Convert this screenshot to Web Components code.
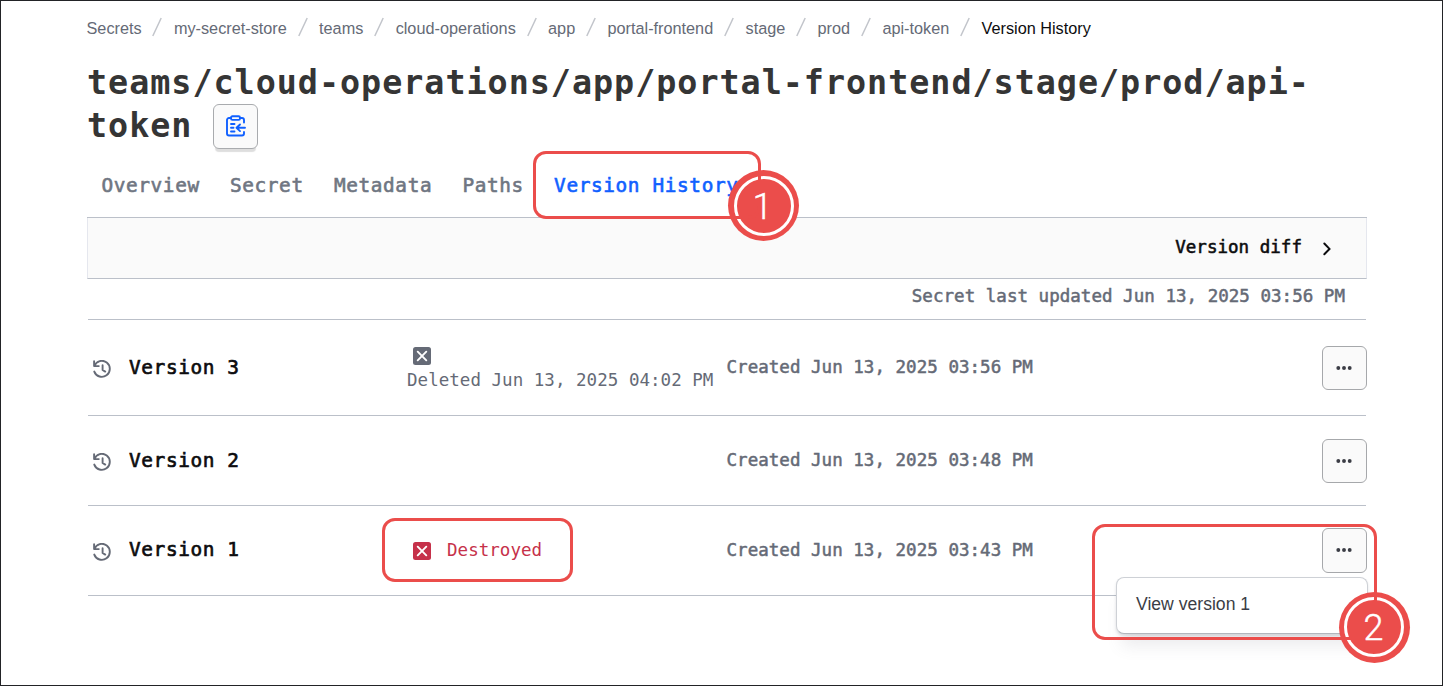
<!DOCTYPE html>
<html lang="en"><head><meta charset="utf-8"><title>Version History</title>
<style>
html,body{margin:0;height:100%}
body{background:#fff;font-family:"Liberation Sans",Arial,sans-serif}
</style></head>
<body>
<vault-page></vault-page>
<script>
const define=(name,html,init)=>customElements.define(name,class extends HTMLElement{
  connectedCallback(){
    if(this.shadowRoot)return;
    this.attachShadow({mode:'open'}).innerHTML=html;
    if(init)init(this,this.shadowRoot);
  }
});

define('crumb-item',`<style>
:host{display:flex;align-items:center;height:24px;font-size:16.25px;line-height:24px;color:#656a76;white-space:nowrap}
:host([current]){color:#0c0c0e}
svg{width:10px;height:20px;margin:-3px 11.5px 0 10.8px}
:host([current]) svg{display:none}
</style><slot></slot><svg viewBox="0 0 10 20"><path d="M.8 19 9.2 1" stroke="#c2c5cb" stroke-width="1.5"/></svg>`);

define('bread-crumbs',`<style>:host{display:flex;margin-left:-.5px}</style>
<crumb-item>Secrets</crumb-item><crumb-item>my-secret-store</crumb-item><crumb-item>teams</crumb-item><crumb-item>cloud-operations</crumb-item><crumb-item>app</crumb-item><crumb-item>portal-frontend</crumb-item><crumb-item>stage</crumb-item><crumb-item>prod</crumb-item><crumb-item>api-token</crumb-item><crumb-item current>Version History</crumb-item>`);

define('copy-button',`<style>
:host{display:flex;box-sizing:border-box;width:45px;height:45px;border:1px solid #a9abae;border-radius:6px;background:#fafafa;align-items:center;justify-content:center;box-shadow:0 5px 1px -2px #dedede}
svg{width:20px;height:22px;margin:-2px 0 0 1px}
</style><svg viewBox="0 0 20 22" fill="none" stroke="#1060ff" stroke-width="1.9" stroke-linecap="round" stroke-linejoin="round"><path d="M5 3H3a2 2 0 0 0-2 2v13.5a2 2 0 0 0 2 2h13a2 2 0 0 0 2-2V17M14 3h2a2 2 0 0 1 2 2v2.5M5 9h3.5M5 12.8h2.5M5 16.5h3.5M19 12.8h-8M14 9.5l-3.5 3.3 3.5 3.3"/><rect x="5" y="1.3" width="9" height="3.6" rx="1.4"/></svg>`);

define('page-title',`<style>
:host{display:block;font:700 33.4px/43px "DejaVu Sans Mono",monospace;letter-spacing:.98px;color:#353535;white-space:nowrap}
div{display:flex;height:43px}
copy-button{margin:0 0 0 21px;flex:none}
</style><div>teams/cloud-operations/app/portal-frontend/stage/prod/api-</div><div>token<copy-button></copy-button></div>`);

define('tab-bar',`<style>
:host{display:flex;gap:30.2px;box-sizing:border-box;height:66px;padding-left:14.4px;border-bottom:1px solid #bbc0c9;font:400 19.4px/67px "DejaVu Sans Mono",monospace;letter-spacing:.62px;color:#6f7682;-webkit-text-stroke:.6px currentColor;white-space:nowrap}
b{font-weight:400;color:#1060ff}
</style><span>Overview</span><span>Secret</span><span>Metadata</span><span>Paths</span><b>Version History</b>`);

define('diff-toolbar',`<style>
:host{display:flex;box-sizing:border-box;height:61px;align-items:center;justify-content:flex-end;gap:20px;padding-right:34px;background:#fafafa;border:solid #e5e7ee;border-width:0 1px;border-bottom:1px solid #bbc0c9;color:#0c0c0e;font:400 17.5px/58px "DejaVu Sans Mono",monospace;letter-spacing:.03px;-webkit-text-stroke:.55px currentColor}
span{margin-top:-2px}
svg{width:10px;height:14px;margin-top:2px}
</style><span>Version diff</span><svg viewBox="0 0 10 14"><path d="m2.3 1.5 5.2 5.4-5.2 5.4" fill="none" stroke="#0c0c0e" stroke-width="2" stroke-linecap="round"/></svg>`);

define('x-square',`<style>:host{display:block;width:18px;height:18px}svg{display:block}</style>
<svg width="18" height="18" viewBox="0 0 18 18"><rect width="18" height="18" rx="2.5" fill="currentColor"/><path d="m4.7 4.7 8.6 8.6m0-8.6-8.6 8.6" stroke="#fff" stroke-width="1.9" stroke-linecap="round"/></svg>`);

define('status-label',`<style>
:host{display:flex;font:400 17.5px/20px "DejaVu Sans Mono",monospace;letter-spacing:.03px;color:#656a76;white-space:nowrap}
:host([kind=deleted]){flex-direction:column;padding-top:1px;gap:5px}
:host([kind=destroyed]){color:#c6314a;align-items:center;gap:16px}
:host([kind=destroyed]) span{margin-top:-2px}
x-square{margin-left:6px}
</style><x-square></x-square><span><slot></slot></span>`);

define('more-button',`<style>
:host{display:flex;box-sizing:border-box;width:45px;height:44px;border:1px solid #a6a8ab;border-radius:6px;background:#fafafa;align-items:center;justify-content:center}
:host([tall]){height:45px}
:host([tall]) svg{margin-bottom:1px}
svg{margin-right:1px}
</style><svg width="16" height="4" viewBox="0 0 16 4" fill="#3b3d45"><circle cx="2.3" cy="2" r="1.95"/><circle cx="8" cy="2" r="1.95"/><circle cx="13.7" cy="2" r="1.95"/></svg>`);

define('version-row',`<style>
:host{display:grid;grid-template-columns:41px 278px 319.5px 1fr 45px;align-items:center;box-sizing:border-box;border-bottom:1px solid #bbc0c9;margin:0 1px;color:#656a76;white-space:nowrap}
.clock{margin:3px 0 0 4.5px}
:host([label="Version 1"]) h2{margin-top:-2px}
h2{margin:0;font:400 19.4px/24px "DejaVu Sans Mono",monospace;letter-spacing:.62px;color:#0c0c0e;-webkit-text-stroke:.65px currentColor}
.date{margin-top:-2px;font:400 17.5px/24px "DejaVu Sans Mono",monospace;letter-spacing:.03px;-webkit-text-stroke:.5px currentColor}
.act{width:45px;margin-left:1px}
</style><svg class="clock" width="19" height="19" viewBox="0 0 19 19" fill="none" stroke="#656a76" stroke-width="1.9" stroke-linecap="round" stroke-linejoin="round"><path d="M1.1 1.3v4.8h4.7M1.4 5.8A8 8 0 1 1 1.3 11.6M9.6 5.2v4.8l2.6 1.6"/></svg>
<h2></h2><slot></slot><span class="date"></span><div class="act"><slot name="action"></slot></div>`,
(host,root)=>{
  root.querySelector('h2').textContent=host.getAttribute('label');
  root.querySelector('.date').textContent=host.getAttribute('date');
});

define('action-menu',`<style>
:host{display:flex;align-items:center;box-sizing:border-box;width:252px;height:57px;padding:0 0 3px 19px;border:1px solid #ced1d6;border-bottom-color:#b2b6bd;border-radius:8px;background:#fff;color:#3b3d45;font-size:17.6px;box-shadow:0 2px 3px #656a7633,0 18px 16px -6px #656a7620}
</style><slot></slot>`);

define('callout-box',`<style>:host{display:block;box-sizing:border-box;border:3px solid #eb4d4b;border-radius:13px}</style>`);

define('badge-ring',`<style>
:host{display:grid;place-items:center;width:71px;height:71px;border-radius:50%;background:#eb4d4b}
div{box-sizing:border-box;width:60px;height:60px;border:3.5px solid #fff;border-radius:50%}
</style><div></div>`);

define('badge-number',`<style>
:host{display:grid;place-items:center;width:71px;height:71px;font:300 36px/50px Roboto,sans-serif;color:#fff;-webkit-text-stroke:.4px #fff}
span{position:relative;top:1.5px;left:-1px}
</style><span><slot></slot></span>`);

define('vault-page',`<style>
:host{display:block;position:relative;box-sizing:border-box;width:1443px;height:686px;border:1px solid #222326;overflow:hidden;background:#fff}
main{width:1280px;padding:15px 0 0 86px}
page-title{margin-top:21px}
tab-bar{margin-top:5px}
.updated{display:block;box-sizing:border-box;height:41px;margin:0 1px;padding-right:21px;border-bottom:1px solid #bbc0c9;text-align:right;color:#656a76;font:400 17.5px/34px "DejaVu Sans Mono",monospace;letter-spacing:.03px;-webkit-text-stroke:.5px currentColor}
.r3{height:96px}.r2{height:90px}.r1{height:90px}
.over{position:absolute}
</style>
<main><bread-crumbs></bread-crumbs><page-title></page-title><tab-bar></tab-bar><diff-toolbar></diff-toolbar>
<div class="updated">Secret last updated Jun 13, 2025 03:56 PM</div>
<version-row class="r3" label="Version 3" date="Created Jun 13, 2025 03:56 PM"><status-label kind="deleted">Deleted Jun 13, 2025 04:02 PM</status-label><more-button slot="action"></more-button></version-row>
<version-row class="r2" label="Version 2" date="Created Jun 13, 2025 03:48 PM"><span></span><more-button slot="action"></more-button></version-row>
<version-row class="r1" label="Version 1" date="Created Jun 13, 2025 03:43 PM"><status-label kind="destroyed">Destroyed</status-label><more-button tall slot="action"></more-button></version-row>
</main>
<action-menu class="over" style="left:1115px;top:576px">View version 1</action-menu>
<badge-ring class="over" style="left:727px;top:169px"></badge-ring>
<badge-ring class="over" style="left:1337.5px;top:590.5px"></badge-ring>
<callout-box class="over" style="left:531.5px;top:150px;width:228px;height:68px"></callout-box>
<callout-box class="over" style="left:381px;top:517px;width:191px;height:64px"></callout-box>
<callout-box class="over" style="left:1090.5px;top:523px;width:285px;height:116px"></callout-box>
<badge-number class="over" style="left:727px;top:169px">1</badge-number>
<badge-number class="over" style="left:1338px;top:590px">2</badge-number>`);
</script>
</body></html>
